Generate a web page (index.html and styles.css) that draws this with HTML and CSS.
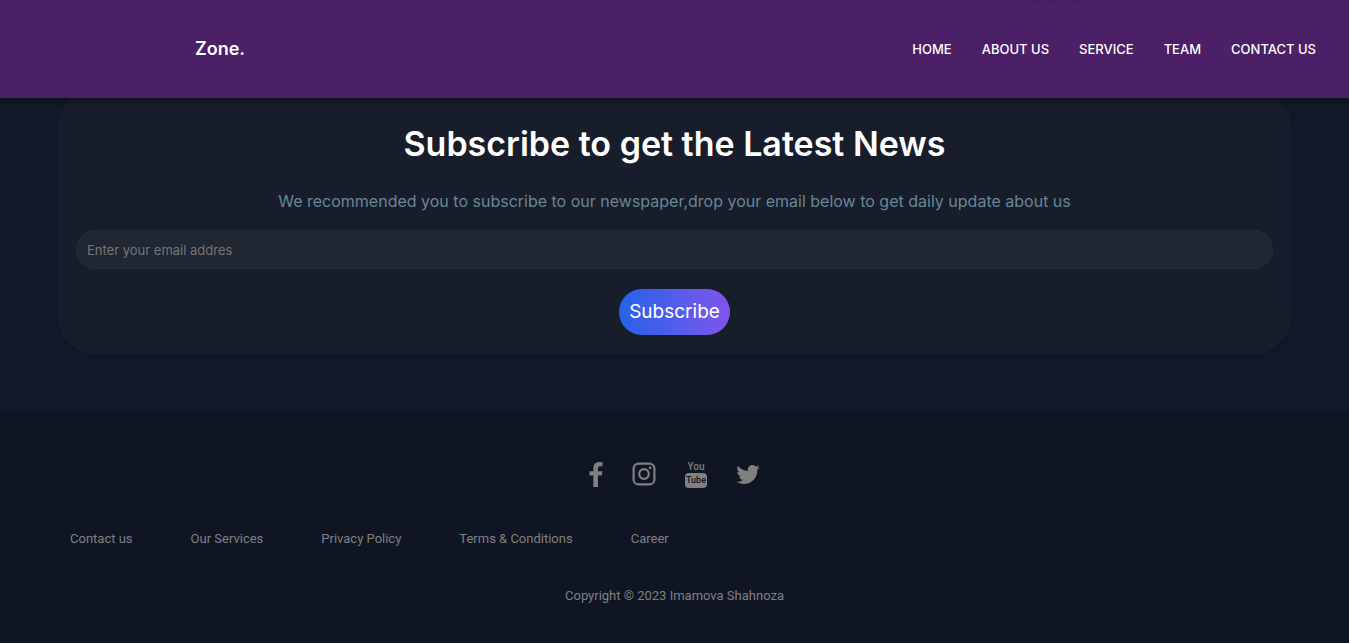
FILE: index.html
```
<!DOCTYPE html>
<html lang="en">
<head>
<meta charset="utf-8">
<title>Zone.</title>
<meta name="viewport" content="width=device-width, initial-scale=1">
<link rel="stylesheet" href="styles.css">
</head>
<body>
<header class="header">
  <span class="passing-title" aria-hidden="true">DEVELOPMENT –</span>
  <a class="logo" href="#">Zone.</a>
  <nav class="nav">
    <a href="#">HOME</a>
    <a href="#">ABOUT US</a>
    <a href="#">SERVICE</a>
    <a href="#">TEAM</a>
    <a href="#">CONTACT US</a>
  </nav>
</header>
<main class="main">
  <form class="card">
    <h1 class="title">Subscribe to get the Latest News</h1>
    <p class="lead">We recommended you to subscribe to our newspaper,drop your email below to get daily update about us</p>
    <input class="email" type="email" aria-label="Email address" placeholder="Enter your email addres">
    <button class="button" type="button">Subscribe</button>
  </form>
</main>
<footer class="footer">
  <div class="social">
    <a href="#" aria-label="Facebook"><svg width="14" height="25" viewBox="95 0 864 1664" preserveAspectRatio="xMidYMid meet"><path d="M959 12v264H802q-86 0-116 36t-30 108v189h293l-39 296H656v759H350V905H95V609h255V391q0-186 104-288.500T731 0q147 0 228 12z"/></svg></a>
    <a href="#" aria-label="Instagram"><svg width="24" height="24" viewBox="0 0 24 24"><rect class="line" x="1.6" y="1.6" width="20.8" height="20.8" rx="5"/><circle class="line" cx="12" cy="12" r="4.8"/><circle cx="18.1" cy="5.9" r="1.4"/></svg></a>
    <a class="youtube" href="#" aria-label="YouTube"><span class="you">You</span><span class="tube">Tube</span></a>
    <a href="#" aria-label="Twitter"><svg width="24" height="19" viewBox="44 256 1576 1280"><path d="M1620 408q-67 98-162 167 1 14 1 42 0 130-38 259.500T1305.500 1125 1121 1335.500t-258 146-323 54.500q-271 0-496-145 35 4 78 4 225 0 401-138-105-2-188-64.500T221 1033q33 5 61 5 43 0 85-11-112-23-185.500-111.500T108 710v-4q68 38 146 41-66-44-105-115t-39-154q0-88 44-163 121 149 294.500 238.500T820 653q-8-38-8-74 0-134 94.500-228.500T1135 256q140 0 236 102 109-21 205-78-37 115-142 178 93-10 186-50z"/></svg></a>
  </div>
  <nav class="links">
    <a href="#">Contact us</a>
    <a href="#">Our Services</a>
    <a href="#">Privacy Policy</a>
    <a href="#">Terms &amp; Conditions</a>
    <a href="#">Career</a>
  </nav>
  <p class="copyright">Copyright © 2023 Imamova Shahnoza</p>
</footer>
</body>
</html>
```
FILE: styles.css
```
* { box-sizing: border-box; }
body {
  margin: 0;
  min-height: 100vh;
  display: flex;
  flex-direction: column;
  background: #111827;
  color: #fff;
  font-family: Inter, "Liberation Sans", sans-serif;
}
a { color: inherit; text-decoration: none; }
.header {
  position: relative;
  z-index: 1;
  display: flex;
  justify-content: space-between;
  align-items: center;
  padding: 36px 33px 36px 195px;
  background: #4b2067;
  box-shadow: 0 3px 10px rgba(0, 0, 0, 0.3);
}
.passing-title {
  position: absolute;
  top: -10px;
  left: 978px;
  font-size: 15px;
  line-height: 20px;
  color: #451d62;
}
.logo { font-size: 18px; line-height: 26px; font-weight: 600; }
.nav { display: flex; gap: 30px; font-size: 13px; line-height: 20px; font-weight: 500; }
.main { padding: 0 56px 56px; }
.card {
  display: flex;
  flex-direction: column;
  align-items: center;
  margin-top: -10px;
  padding: 30px 19px 19px;
  border: 1px solid #11142d;
  border-radius: 40px;
  background: #171d2b;
  box-shadow: 0 25px 20px -20px rgba(0, 0, 0, 0.1);
}
.title { margin: 0; font-size: 34px; line-height: 50px; font-weight: 600; text-align: center; }
.lead { margin: 20px 0 17px; font-size: 16px; line-height: 24px; color: #6a8695; text-align: center; }
.email {
  width: 100%;
  height: 39px;
  padding: 0 10px;
  border: 1px solid #262c38;
  border-radius: 20px;
  background: #202632;
  box-shadow: 0 25px 20px -20px rgba(0, 0, 0, 0.1);
  color: #fff;
  font: 13px/20px Inter, "Liberation Sans", sans-serif;
}
.email::placeholder { color: #757575; opacity: 1; }
.button {
  margin-top: 20px;
  padding: 10px;
  border: 0;
  border-radius: 24px;
  background: linear-gradient(90deg, #2563eb, #8055ea);
  color: #fff;
  font: 19px/26px Inter, "Liberation Sans", sans-serif;
}
.footer {
  flex: 1;
  padding: 49px 70px 36px;
  background: #0f1523;
  color: #808080;
  font-family: Roboto, "Liberation Sans", sans-serif;
  font-size: 13px;
  line-height: 20px;
}
.social { display: flex; justify-content: center; align-items: center; gap: 29px; height: 28px; }
.social a { display: block; }
.social svg { display: block; fill: #808080; }
.social .line { fill: none; stroke: #808080; stroke-width: 2.2; }
.social .youtube { width: 22px; font-weight: 500; }
.you, .tube { display: flex; justify-content: center; }
.you { font-size: 10px; line-height: 12px; }
.tube { font-size: 9px; line-height: 15px; border-radius: 4px; background: #808080; color: #0f1523; }
.links { display: flex; flex-wrap: wrap; gap: 10px 58px; margin-top: 41px; }
.copyright { margin: 37px 0 0; text-align: center; }
```
